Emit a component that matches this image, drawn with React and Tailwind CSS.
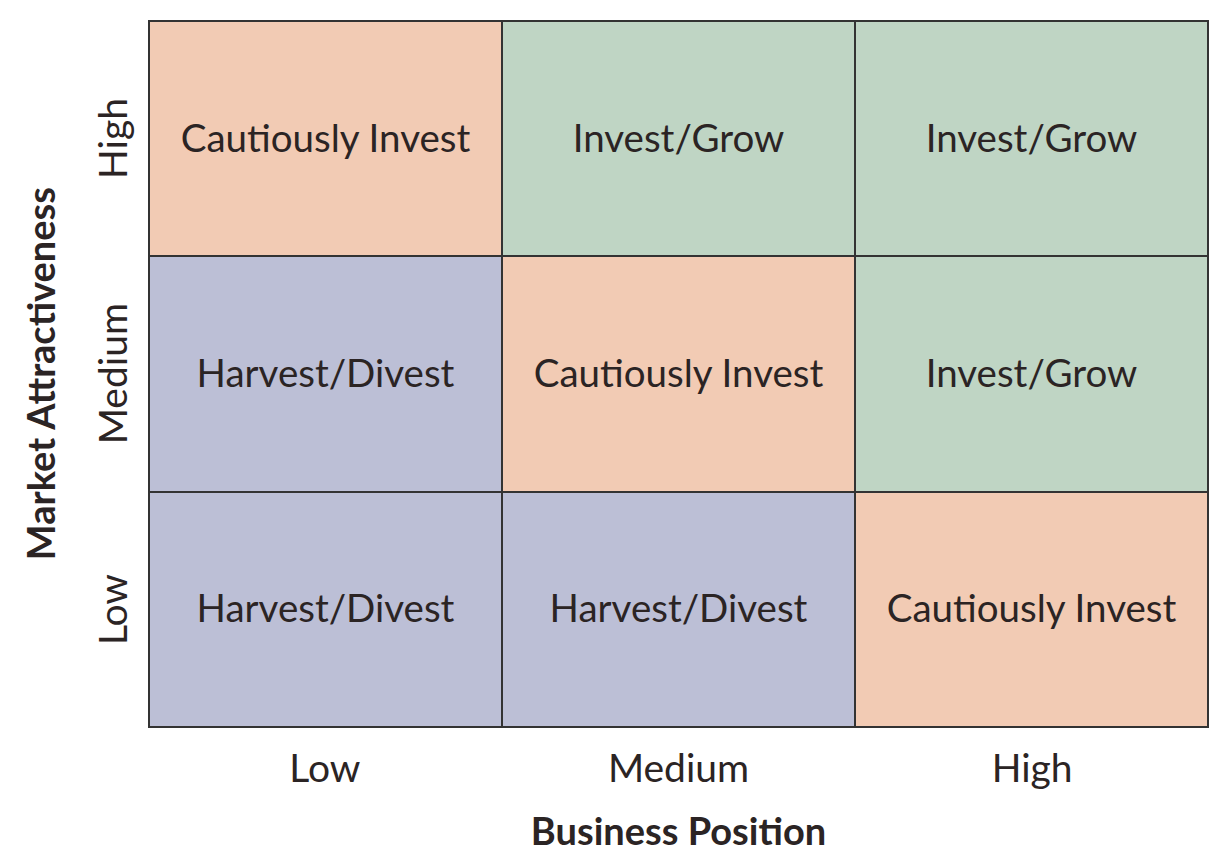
import React from 'react';

const cells = [
    ['Cautiously Invest', 'bg-[#f2cbb4]'],
    ['Invest/Grow', 'bg-[#bfd5c4]'],
    ['Invest/Grow', 'bg-[#bfd5c4]'],
    ['Harvest/Divest', 'bg-[#bcbfd6]'],
    ['Cautiously Invest', 'bg-[#f2cbb4]'],
    ['Invest/Grow', 'bg-[#bfd5c4]'],
    ['Harvest/Divest', 'bg-[#bcbfd6]'],
    ['Harvest/Divest', 'bg-[#bcbfd6]'],
    ['Cautiously Invest', 'bg-[#f2cbb4]'],
];

export default function App() {
    return (
        <div className="w-[1225px] h-[866px] bg-white text-[#2b2424] font-['Lato',sans-serif] flex flex-col">
            <div className="flex pt-[20px]">
                {/* y-axis */}
                <div className="w-[148px] h-[708px] flex">
                    <div className="w-[80px] flex items-center justify-center">
                        <span className="[writing-mode:vertical-rl] rotate-180 text-[38px] font-bold leading-none">
                            Market Attractiveness
                        </span>
                    </div>
                    <div className="flex-1 flex flex-col pr-[16px]">
                        {['High', 'Medium', 'Low'].map((l) => (
                            <div key={l} className="flex-1 flex items-center justify-end">
                                <span className="[writing-mode:vertical-rl] rotate-180 text-[39px] leading-none">{l}</span>
                            </div>
                        ))}
                    </div>
                </div>

                {/* matrix */}
                <div className="w-[1061px] h-[708px] border-2 border-[#333] bg-[#333] grid grid-cols-3 grid-rows-3 gap-[2px]">
                    {cells.map(([label, bg], i) => (
                        <div key={i} className={`${bg} flex items-center justify-center text-[38.5px] pb-[2px]`}>
                            {label}
                        </div>
                    ))}
                </div>
            </div>

            {/* x-axis */}
            <div className="flex pl-[148px]">
                <div className="w-[1061px] flex flex-col items-center">
                    <div className="w-full grid grid-cols-3 pt-[20px] text-[39px] leading-none">
                        <div className="text-center">Low</div>
                        <div className="text-center">Medium</div>
                        <div className="text-center">High</div>
                    </div>
                    <div className="mt-[24px] text-[38px] font-bold leading-none">Business Position</div>
                </div>
            </div>
        </div>
    );
}
